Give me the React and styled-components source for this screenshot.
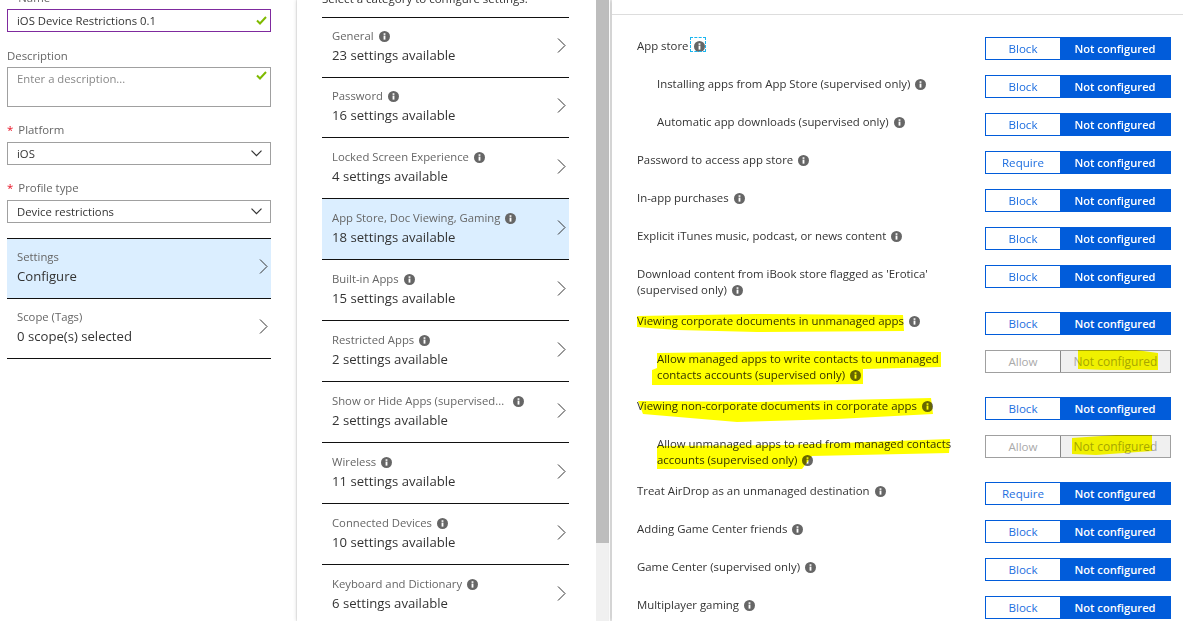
import React from 'react';
import styled, { createGlobalStyle } from 'styled-components';

const GlobalStyle = createGlobalStyle`
  html, body {
    margin: 0;
    height: 100%;
    overflow: hidden;
    background: white;
  }
  body {
    font-family: "Open Sans", "Liberation Sans", sans-serif;
    color: #333;
  }
`;

const categories = [
  { title: 'General', count: '23 settings available', short: true },
  { title: 'Password', count: '16 settings available', short: true },
  { title: 'Locked Screen Experience', count: '4 settings available' },
  { title: 'App Store, Doc Viewing, Gaming', count: '18 settings available', active: true },
  { title: 'Built-in Apps', count: '15 settings available' },
  { title: 'Restricted Apps', count: '2 settings available' },
  { title: 'Show or Hide Apps (supervised...', count: '2 settings available', wideGap: true },
  { title: 'Wireless', count: '11 settings available' },
  { title: 'Connected Devices', count: '10 settings available' },
  { title: 'Keyboard and Dictionary', count: '6 settings available' },
];

const settings = [
  { lines: ['App store'], focus: true },
  { lines: ['Installing apps from App Store (supervised only)'], sub: true },
  { lines: ['Automatic app downloads (supervised only)'], sub: true },
  { lines: ['Password to access app store'], on: 'Require' },
  { lines: ['In-app purchases'] },
  { lines: ['Explicit iTunes music, podcast, or news content'] },
  { lines: ["Download content from iBook store flagged as 'Erotica'", '(supervised only)'] },
  {
    lines: ['Viewing corporate documents in unmanaged apps'],
    mark: 'M0 3 L120 1 L266 2 L267 18 L120 19 L40 17 L0 14 Z',
  },
  {
    lines: ['Allow managed apps to write contacts to unmanaged', 'contacts accounts (supervised only)'],
    sub: true,
    on: 'Allow',
    disabled: true,
    mark: 'M0 2 L140 0 L284 1 L284 16 L206 18 L206 33 L100 34 L-5 34 L-5 19 L0 17 Z',
    toggleMark: 'M92 -1 L150 -1 L172 2 L172 19 L120 19 L92 18 Z',
  },
  {
    lines: ['Viewing non-corporate documents in corporate apps'],
    mark: 'M1 3 L120 4 L294 0 L296 16 L200 21 L100 24 L6 16 Z',
  },
  {
    lines: ['Allow unmanaged apps to read from managed contacts', 'accounts (supervised only)'],
    sub: true,
    on: 'Allow',
    disabled: true,
    mark: 'M0 10 L130 9 L293 3 L292 17 L155 20 L145 33 L0 33 Z',
    toggleMark: 'M86 2 L130 -1 L166 -1 L166 15 L110 19 L86 18 Z',
  },
  { lines: ['Treat AirDrop as an unmanaged destination'], on: 'Require' },
  { lines: ['Adding Game Center friends'] },
  { lines: ['Game Center (supervised only)'] },
  { lines: ['Multiplayer gaming'] },
];

function InfoIcon() {
  return (
    <InfoSvg viewBox="0 0 12 12">
      <circle cx="6" cy="6" r="6" fill="#666" />
      <rect x="5" y="5" width="2" height="4.4" fill="white" />
      <rect x="5" y="2.5" width="2" height="1.7" fill="white" />
    </InfoSvg>
  );
}

function Chevron() {
  return (
    <ChevronSvg viewBox="0 0 9 15">
      <path d="M1 0.5 L8 7.5 L1 14.5" fill="none" stroke="#333" strokeWidth="1" />
    </ChevronSvg>
  );
}

function Check() {
  return (
    <CheckSvg viewBox="0 0 11 9">
      <path d="M1 4.5 L4 7.5 L10 1" fill="none" stroke="#7fba00" strokeWidth="2" />
    </CheckSvg>
  );
}

function Caret() {
  return (
    <CaretSvg viewBox="0 0 11 7">
      <path d="M0.5 0.7 L5.5 5.7 L10.5 0.7" fill="none" stroke="#333" strokeWidth="1.2" />
    </CaretSvg>
  );
}

function SettingRow({ item }) {
  const on = item.on || 'Block';
  return (
    <Row>
      <Label $sub={item.sub}>
        {item.lines.map((line, i) => (
          <span key={line}>
            {line}
            {i === item.lines.length - 1 && (
              <IconSlot $focus={item.focus}>
                <InfoIcon />
              </IconSlot>
            )}
            {i < item.lines.length - 1 && <br />}
          </span>
        ))}
        {item.mark && (
          <Marker>
            <path d={item.mark} />
          </Marker>
        )}
      </Label>
      <Toggle $disabled={item.disabled}>
        <ToggleOff $disabled={item.disabled}>{on}</ToggleOff>
        <ToggleOn $disabled={item.disabled}>Not configured</ToggleOn>
        {item.toggleMark && (
          <Marker>
            <path d={item.toggleMark} />
          </Marker>
        )}
      </Toggle>
    </Row>
  );
}

export default function App() {
  return (
    <Page>
      <GlobalStyle />
      <LeftBlade>
        <FieldLabel>
          <Star>*</Star>Name
        </FieldLabel>
        <TextBox $focused>
          iOS Device Restrictions 0.1
          <Check />
        </TextBox>
        <FieldLabel $low>Description</FieldLabel>
        <TextArea>
          Enter a description...
          <Check />
        </TextArea>
        <FieldLabel>
          <Star>*</Star>Platform
        </FieldLabel>
        <TextBox>
          iOS
          <Caret />
        </TextBox>
        <FieldLabel>
          <Star>*</Star>Profile type
        </FieldLabel>
        <TextBox>
          Device restrictions
          <Caret />
        </TextBox>
        <NavList>
          <NavItem $active>
            <ItemText>
              <ItemTitle>Settings</ItemTitle>
              <ItemValue>Configure</ItemValue>
            </ItemText>
            <Chevron />
          </NavItem>
          <NavItem>
            <ItemText>
              <ItemTitle>Scope (Tags)</ItemTitle>
              <ItemValue>0 scope(s) selected</ItemValue>
            </ItemText>
            <Chevron />
          </NavItem>
        </NavList>
      </LeftBlade>

      <MiddleBlade>
        <CategoryColumn>
          <Hint>Select a category to configure settings.</Hint>
          <CategoryList>
            {categories.map((c) => (
              <Category key={c.title} $active={c.active} $short={c.short}>
                <ItemText>
                  <ItemTitle>
                    {c.title}
                    <IconSlot $wide={c.wideGap}>
                      <InfoIcon />
                    </IconSlot>
                  </ItemTitle>
                  <ItemValue>{c.count}</ItemValue>
                </ItemText>
                <Chevron />
              </Category>
            ))}
          </CategoryList>
        </CategoryColumn>
        <ScrollTrack>
          <ScrollThumb />
        </ScrollTrack>
      </MiddleBlade>

      <RightBlade>
        <BladeHeader />
        <SettingList>
          {settings.map((s) => (
            <SettingRow key={s.lines[0]} item={s} />
          ))}
        </SettingList>
      </RightBlade>
    </Page>
  );
}

const Page = styled.div`
  display: flex;
  height: 621px;
  width: 1183px;
  overflow: hidden;
  background: #f2f2f2;
`;

const LeftBlade = styled.div`
  width: 296px;
  flex: none;
  box-sizing: border-box;
  background: white;
  padding: 0 25px 0 7px;
  margin-top: -10px;
`;

const FieldLabel = styled.div`
  height: 16px;
  line-height: 16px;
  font-size: 11.4px;
  color: #666;
  margin: ${(p) => (p.$low ? '16px 0 3px' : '15px 0 4px')};
  &:first-child {
    margin-top: 0;
    margin-bottom: 3px;
  }
`;

const Star = styled.span`
  color: #e81123;
  margin-right: 5px;
`;

const TextBox = styled.div`
  height: 23px;
  box-sizing: border-box;
  border: 1px solid ${(p) => (p.$focused ? '#7f2a9e' : '#a0a0a0')};
  padding: 0 8px 0 9px;
  display: flex;
  align-items: center;
  justify-content: space-between;
  font-size: 11.3px;
  color: #333;
`;

const TextArea = styled.div`
  height: 40px;
  box-sizing: border-box;
  border: 1px solid #a0a0a0;
  padding: 3px 8px 3px 9px;
  display: flex;
  justify-content: space-between;
  align-items: flex-start;
  font-size: 11.3px;
  color: #888;
`;

const NavList = styled.div`
  margin-top: 15px;
  border-top: 1px solid #111;
`;

const NavItem = styled.div`
  height: 60px;
  box-sizing: border-box;
  border-bottom: 1px solid #111;
  background: ${(p) => (p.$active ? '#dbeeff' : 'white')};
  padding: 0 3px 5px 10px;
  display: flex;
  align-items: center;
  justify-content: space-between;
`;

const ItemText = styled.div`
  margin-top: 2px;
`;

const ItemTitle = styled.div`
  font-size: 11.3px;
  line-height: 18px;
  color: #666;
`;

const ItemValue = styled.div`
  margin-top: 1px;
  font-size: 13.15px;
  line-height: 19px;
  color: #333;
`;

const MiddleBlade = styled.div`
  width: 313px;
  margin-left: 1px;
  flex: none;
  display: flex;
  background: white;
  box-shadow: 0 0 4px rgba(0, 0, 0, 0.2);
`;

const CategoryColumn = styled.div`
  width: 299px;
  flex: none;
  box-sizing: border-box;
  padding: 0 27px 0 25px;
`;

const Hint = styled.div`
  height: 17px;
  margin-top: -9px;
  padding-bottom: 9px;
  font-size: 11.5px;
  line-height: 16px;
  color: #333;
`;

const CategoryList = styled.div`
  border-top: 1px solid #111;
`;

const Category = styled.div`
  height: ${(p) => (p.$short ? '60px' : '61px')};
  box-sizing: border-box;
  border-bottom: 1px solid #111;
  background: ${(p) => (p.$active ? '#dbeeff' : 'white')};
  padding: 0 3px ${(p) => (p.$short ? '5px' : '4px')} 10px;
  display: flex;
  align-items: center;
  justify-content: space-between;
`;

const ScrollTrack = styled.div`
  width: 13px;
  flex: none;
  background: #f0f0f0;
`;

const ScrollThumb = styled.div`
  height: 543px;
  background: #bdbdbd;
`;

const RightBlade = styled.div`
  flex: 1;
  margin-left: 2px;
  background: white;
  box-shadow: 0 0 4px rgba(0, 0, 0, 0.2);
`;

const BladeHeader = styled.div`
  height: 14px;
  border-bottom: 1px solid #ddd;
`;

const SettingList = styled.div`
  padding: 22px 12px 0 25px;
`;

const Row = styled.div`
  display: flex;
  justify-content: space-between;
  align-items: flex-start;
  padding-bottom: 14px;
`;

const Label = styled.div`
  position: relative;
  margin: 1px 0 0 ${(p) => (p.$sub ? '20px' : '0')};
  font-size: 11.4px;
  line-height: 16px;
  color: #333;
`;

const IconSlot = styled.span`
  position: relative;
  display: inline-block;
  vertical-align: -2px;
  margin-left: ${(p) => (p.$wide ? '9px' : '5px')};
  ${(p) =>
    p.$focus &&
    `&::after {
      content: '';
      position: absolute;
      left: -4px;
      top: -4px;
      width: 14px;
      height: 13px;
      border: 1px dashed #19b5f0;
    }`}
`;

const InfoSvg = styled.svg`
  display: block;
  width: 11px;
  height: 11px;
`;

const ChevronSvg = styled.svg`
  width: 9px;
  height: 15px;
  flex: none;
`;

const CheckSvg = styled.svg`
  width: 11px;
  height: 9px;
  flex: none;
  margin-right: -5px;
`;

const CaretSvg = styled.svg`
  width: 11px;
  height: 7px;
  flex: none;
`;

const Toggle = styled.div`
  position: relative;
  display: flex;
  width: 186px;
  height: 23px;
  flex: none;
  margin-bottom: 1px;
  box-sizing: border-box;
  border: 1px solid ${(p) => (p.$disabled ? '#a0a0a0' : '#015cda')};
  font-size: 11.6px;
  line-height: 21px;
  text-align: center;
`;

const ToggleOff = styled.div`
  width: 74px;
  flex: none;
  color: ${(p) => (p.$disabled ? '#aaa' : '#1f6fe0')};
  background: white;
`;

const ToggleOn = styled.div`
  flex: 1;
  color: ${(p) => (p.$disabled ? '#a6a6a6' : 'white')};
  font-size: ${(p) => (p.$disabled ? '12px' : '11.2px')};
  font-weight: ${(p) => (p.$disabled ? 400 : 600)};
  background: ${(p) => (p.$disabled ? '#f0f0f0' : '#015cda')};
  border-left: ${(p) => (p.$disabled ? '1px solid #888' : 'none')};
`;

const Marker = styled.svg`
  position: absolute;
  left: 0;
  top: 0;
  width: 100%;
  height: 100%;
  overflow: visible;
  pointer-events: none;
  mix-blend-mode: multiply;
  fill: #ffff00;
`;
